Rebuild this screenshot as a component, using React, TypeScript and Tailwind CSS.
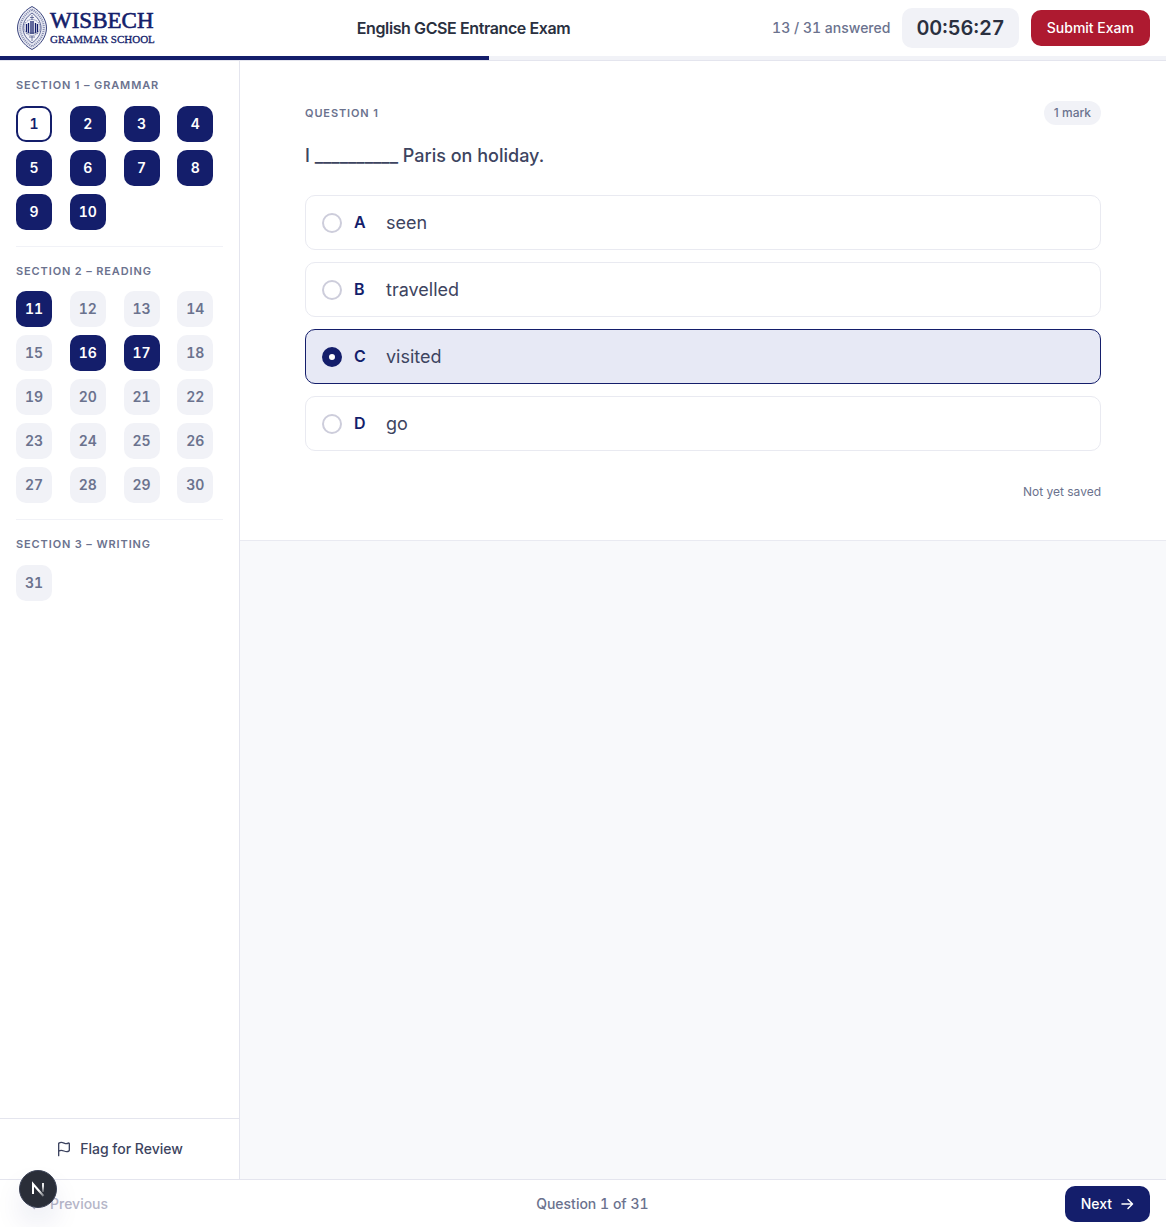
import React, { useState } from 'react';
import { Flag } from 'lucide-react';

interface Section {
  title: string;
  from: number;
  to: number;
}

const TOTAL_QUESTIONS = 31;

const SECTIONS: Section[] = [
  { title: 'Section 1 – Grammar', from: 1, to: 10 },
  { title: 'Section 2 – Reading', from: 11, to: 30 },
  { title: 'Section 3 – Writing', from: 31, to: 31 },
];

const ANSWERED = [1, 2, 3, 4, 5, 6, 7, 8, 9, 10, 11, 16, 17];

const OPTIONS = [
  { letter: 'A', text: 'seen' },
  { letter: 'B', text: 'travelled' },
  { letter: 'C', text: 'visited' },
  { letter: 'D', text: 'go' },
];

function Logo() {
  return (
    <svg width="139" height="46" viewBox="0 0 139 46" fill="none" role="img" aria-label="Wisbech Grammar School">
      <g stroke="#3d477f">
        <path d="M16 1.5C25 6 30.500 15 30.500 23S25 40 16 44.500C7 40 1.500 31 1.500 23S7 6 16 1.500Z" fill="#e6e8f2" strokeWidth="1" />
        <path d="M16 4.500C23.500 9 27.800 16 27.800 23S23.500 37 16 41.500C8.500 37 4.200 30 4.200 23S8.500 9 16 4.500Z" strokeWidth="2" strokeDasharray="1 1" opacity="0.6" />
        <path d="M16 8C21.500 12 25 17 25 23S21.500 34 16 38C10.500 34 7 29 7 23S10.500 12 16 8Z" strokeWidth="0.8" fill="#f1f2f8" />
        <circle cx="16" cy="22.500" r="8" strokeWidth="1" strokeDasharray="1 1" opacity="0.8" />
        <path d="M10.500 19v8M12.500 18v10M15 16v13M17 16v13M19.500 18v10M21.500 19v8" stroke="#141e6b" strokeWidth="1.3" />
        <path d="M10 28h12M13 32h6M14 12.500h4M16 10v5M16 31v5" strokeWidth="1" opacity="0.7" />
      </g>
      <g fill="#141e6b" stroke="#141e6b" fontFamily="'Liberation Serif', serif">
        <text x="34" y="23" fontSize="23" strokeWidth="0.6">WISBECH</text>
        <text x="34" y="38" fontSize="11" strokeWidth="0.3">GRAMMAR SCHOOL</text>
      </g>
    </svg>
  );
}

function Arrow({ back = false }: { back?: boolean }) {
  return (
    <svg width="14" height="14" viewBox="0 0 14 14" fill="none" stroke="currentColor" strokeWidth="1.5" strokeLinecap="round" strokeLinejoin="round" aria-hidden="true">
      <path d={back ? 'M12 7H2M6.500 2.500L2 7l4.500 4.500' : 'M2 7h10.500M8 2.500L12.500 7 8 11.500'} />
    </svg>
  );
}

export default function App() {
  const [current, setCurrent] = useState(1);
  const [selected, setSelected] = useState('C');

  const questionClass = (n: number) => {
    if (n === current) return 'border-2 border-[#141e6b] bg-white text-[#141e6b]';
    if (ANSWERED.includes(n)) return 'bg-[#141e6b] text-white';
    return 'bg-[#f1f2f7] text-[#6b728e]';
  };

  return (
    <div className="relative flex h-screen flex-col bg-[#f8f9fb] font-['Inter',sans-serif] text-[#2a3040]">
      <header className="flex h-14 shrink-0 items-center justify-between bg-white px-4">
        <Logo />
        <h1 className="text-base font-semibold tracking-tight">English GCSE Entrance Exam</h1>
        <div className="flex items-center gap-3">
          <span className="text-sm font-medium tabular-nums text-[#6b728e]">{ANSWERED.length} / {TOTAL_QUESTIONS} answered</span>
          <span className="flex h-10 items-center rounded-[10px] bg-[#f1f2f7] px-3.5 text-xl font-semibold tabular-nums">00:56:27</span>
          <button type="button" className="h-9 rounded-[10px] bg-[#ae1a30] px-4 text-sm font-medium text-white">Submit Exam</button>
        </div>
      </header>
      <div className="h-[5px] shrink-0 border-b border-[#e4e5ee] bg-[#f1f2f7]">
        <div className="h-full bg-[#141e6b]" style={{ width: `${(ANSWERED.length / TOTAL_QUESTIONS) * 100}%` }} />
      </div>

      <div className="flex min-h-0 flex-1">
        <aside className="flex w-60 shrink-0 flex-col border-r border-[#e4e5ee] bg-white">
          <nav className="flex-1 px-4">
            {SECTIONS.map((section) => (
              <section key={section.title} className="border-b border-[#f1f2f7] py-4 last:border-b-0">
                <h2 className="mb-3 text-[11px] leading-normal font-semibold tracking-[0.08em] text-[#6b728e] uppercase">{section.title}</h2>
                <div className="grid grid-cols-4 gap-2">
                  {Array.from({ length: section.to - section.from + 1 }, (_, i) => section.from + i).map((n) => (
                    <button
                      key={n}
                      type="button"
                      onClick={() => setCurrent(n)}
                      className={`size-9 rounded-[10px] text-sm font-semibold tabular-nums ${questionClass(n)}`}
                    >
                      {n}
                    </button>
                  ))}
                </div>
              </section>
            ))}
          </nav>
          <div className="border-t border-[#e4e5ee] p-3">
            <button type="button" className="flex h-9 w-full items-center justify-center gap-2 text-sm font-medium text-[#3d4460]">
              <Flag size={16} strokeWidth={2} />
              Flag for Review
            </button>
          </div>
        </aside>

        <main className="min-w-0 flex-1">
          <div className="border-b border-[#e9eaf1] bg-white">
            <div className="mx-auto max-w-[860px] px-8 py-10">
              <div className="mb-4 flex items-center justify-between">
                <span className="text-[11px] font-semibold tracking-[0.08em] text-[#6b728e] uppercase">Question {current}</span>
                <span className="rounded-full bg-[#f1f2f7] px-2.5 py-1 text-xs font-medium text-[#6b728e]">1 mark</span>
              </div>
              <fieldset>
                <legend className="mb-6 text-lg leading-[30px] font-medium text-[#3d4460]">I __________ Paris on holiday.</legend>
                <div className="flex flex-col gap-3">
                  {OPTIONS.map((option) => (
                    <label
                      key={option.letter}
                      className={`flex items-center gap-3 rounded-[10px] border p-4 leading-[21px] ${
                        selected === option.letter ? 'border-[#141e6b] bg-[#e7e9f5]' : 'border-[#e9eaf1] bg-white'
                      }`}
                    >
                      <input
                        type="radio"
                        name="answer"
                        value={option.letter}
                        checked={selected === option.letter}
                        onChange={() => setSelected(option.letter)}
                        className="size-5 appearance-none rounded-full border-2 border-[#cdcddb] bg-white checked:border-7 checked:border-[#141e6b]"
                      />
                      <span className="w-5 text-base leading-[21px] font-semibold text-[#141e6b]">{option.letter}</span>
                      <span className="text-lg leading-[21px] text-[#3d4460]">{option.text}</span>
                    </label>
                  ))}
                </div>
              </fieldset>
              <p className="mt-8 text-right text-xs leading-[17px] text-[#6b728e]">Not yet saved</p>
            </div>
          </div>
        </main>
      </div>

      <footer className="flex h-12 shrink-0 items-center justify-between border-t border-[#e4e5ee] bg-white px-4 text-sm font-medium">
        <button type="button" disabled className="flex h-9 items-center gap-2 px-3 text-[#b5b6c8]">
          <Arrow back />
          Previous
        </button>
        <span className="tabular-nums text-[#6b728e]">Question {current} of {TOTAL_QUESTIONS}</span>
        <button type="button" className="flex h-9 items-center gap-2 rounded-[10px] bg-[#141e6b] px-4 text-white">
          Next
          <Arrow />
        </button>
      </footer>

      <button
        type="button"
        aria-label="Open dev tools"
        className="absolute bottom-[19px] left-[19px] flex size-[38px] items-center justify-center rounded-full border border-[#3b4256] bg-[#2a2e38] shadow-[0_16px_32px_-8px_rgba(20,30,107,0.24)]"
      >
        <svg width="16" height="16" viewBox="0 0 16 16" fill="none">
          <defs>
            <linearGradient id="stem" x1="13" y1="2" x2="13" y2="12" gradientUnits="userSpaceOnUse">
              <stop offset="0.300" stopColor="#fff" />
              <stop offset="1" stopColor="#fff" stopOpacity="0.100" />
            </linearGradient>
            <linearGradient id="slash" x1="9" y1="9" x2="14" y2="15" gradientUnits="userSpaceOnUse">
              <stop stopColor="#fff" />
              <stop offset="1" stopColor="#fff" stopOpacity="0.300" />
            </linearGradient>
          </defs>
          <path d="M3 13V3L13.500 15" stroke="url(#slash)" strokeWidth="2" />
          <path d="M13 2V11" stroke="url(#stem)" strokeWidth="1.800" />
        </svg>
      </button>
    </div>
  );
}
